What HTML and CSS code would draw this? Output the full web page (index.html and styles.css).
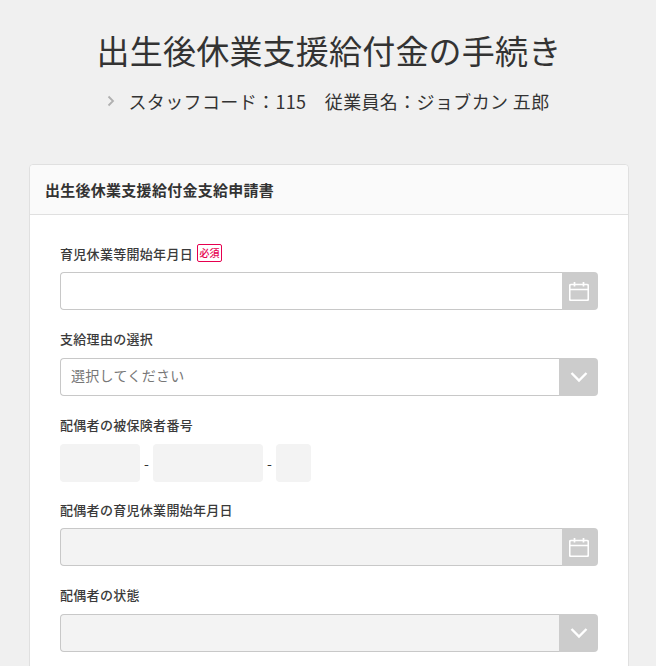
FILE: index.html
```html
<!DOCTYPE html>
<html lang="ja">
<head>
<meta charset="utf-8">
<title>出生後休業支援給付金の手続き</title>
<link rel="stylesheet" href="styles.css">
</head>
<body>
<header class="page-head">
  <h1 class="title">出生後休業支援給付金の手続き</h1>
  <p class="staff">
    <svg class="staff-chevron" width="8" height="12" viewBox="0 0 8 12"><path d="M1.500 1.500 6 6l-4.500 4.500" fill="none" stroke="#b0b0b0" stroke-width="1.800"/></svg>
    <span>スタッフコード：115　従業員名：ジョブカン 五郎</span>
  </p>
</header>
<main class="card">
  <h2 class="card-head">出生後休業支援給付金支給申請書</h2>
  <form class="card-body">
    <div class="field field-low">
      <div class="label">育児休業等開始年月日<span class="req">必須</span></div>
      <div class="control">
        <div class="input"></div>
        <div class="addon addon-date">
          <svg class="ico-date" width="20" height="20" viewBox="0 0 20 20"><path d="M2 3.500h16a1.300 1.300 0 0 1 1.300 1.300V18a1.300 1.300 0 0 1-1.300 1.300H2A1.300 1.300 0 0 1 .7 18V4.800A1.300 1.300 0 0 1 2 3.500ZM.7 8.500h18.600M5.500 1v4.500M14.500 1v4.500" fill="none" stroke="#fff" stroke-width="1.700"/></svg>
        </div>
      </div>
    </div>
    <div class="field">
      <div class="label">支給理由の選択</div>
      <div class="control">
        <div class="input placeholder">選択してください</div>
        <div class="addon addon-select">
          <svg width="18" height="12" viewBox="0 0 18 12"><path d="M1.500 2 9 9.500 16.500 2" fill="none" stroke="#fff" stroke-width="2.400"/></svg>
        </div>
      </div>
    </div>
    <div class="field field-split">
      <div class="label">配偶者の被保険者番号</div>
      <div class="split">
        <div class="seg seg-a"></div><span class="dash">-</span>
        <div class="seg seg-b"></div><span class="dash">-</span>
        <div class="seg seg-c"></div>
      </div>
    </div>
    <div class="field field-low">
      <div class="label">配偶者の育児休業開始年月日</div>
      <div class="control">
        <div class="input disabled"></div>
        <div class="addon addon-date">
          <svg class="ico-date" width="20" height="20" viewBox="0 0 20 20"><path d="M2 3.500h16a1.300 1.300 0 0 1 1.300 1.300V18a1.300 1.300 0 0 1-1.300 1.300H2A1.300 1.300 0 0 1 .7 18V4.800A1.300 1.300 0 0 1 2 3.500ZM.7 8.500h18.600M5.500 1v4.500M14.500 1v4.500" fill="none" stroke="#fff" stroke-width="1.700"/></svg>
        </div>
      </div>
    </div>
    <div class="field">
      <div class="label">配偶者の状態</div>
      <div class="control">
        <div class="input disabled"></div>
        <div class="addon addon-select">
          <svg width="18" height="12" viewBox="0 0 18 12"><path d="M1.500 2 9 9.500 16.500 2" fill="none" stroke="#fff" stroke-width="2.400"/></svg>
        </div>
      </div>
    </div>
  </form>
</main>
</body>
</html>
```
FILE: styles.css
```css
* { box-sizing: border-box; }
html, body { margin: 0; height: 666px; overflow: hidden; }
body {
  background: #f0f0f0;
  color: #333;
  font-family: "Noto Sans CJK JP", "Noto Sans", sans-serif;
}
.page-head { padding-top: 26px; text-align: center; }
.title {
  margin: 0;
  padding-left: 2px;
  font-size: 33px;
  letter-spacing: 0.2px;
  line-height: 48px;
  font-weight: 400;
}
.staff {
  margin: 12px 0 0;
  display: flex;
  justify-content: center;
  align-items: center;
  gap: 14px;
  font-size: 18px;
  letter-spacing: 0.36px;
  line-height: 30px;
}
.card {
  margin: 48px 27px 0 29px;
  background: #fff;
  border: 1px solid #e0e0e0;
  border-radius: 4px;
  height: 700px;
}
.card-head {
  margin: 0;
  height: 50px;
  padding-left: 15px;
  background: #fafafa;
  border-bottom: 1px solid #e0e0e0;
  border-radius: 4px 4px 0 0;
  font-size: 15px;
  letter-spacing: 0.27px;
  font-weight: 700;
  line-height: 50px;
}
.card-body { padding: 28px 30px 0; display: flex; flex-direction: column; gap: 18px; }
.label {
  display: flex;
  align-items: center;
  height: 20px;
  margin-bottom: 10px;
  font-size: 13px;
  font-weight: 500;
  letter-spacing: 0.3px;
  color: #3a3a3a;
}
.field-low .label { margin-bottom: 9px; }
.req {
  margin-left: 4px;
  padding: 0 1.500px;
  height: 18px;
  line-height: 16px;
  border: 1px solid #e6004f;
  border-radius: 2px;
  color: #e6004f;
  font-size: 10px;
  letter-spacing: 0;
  background: #fff;
}
.control { display: flex; height: 38px; }
.input {
  flex: 1;
  border: 1px solid #c8c8c8;
  border-right: 0;
  border-radius: 4px 0 0 4px;
  background: #fff;
  padding-left: 10px;
  font-size: 14px;
  line-height: 33px;
}
.placeholder { color: #777; letter-spacing: 0.3px; }
.disabled { background: #f3f3f3; }
.addon {
  display: flex;
  align-items: center;
  justify-content: center;
  background: #ccc;
  border-radius: 0 4px 4px 0;
}
.addon-date { width: 36px; }
.addon-select { width: 39px; }
.ico-date { margin-right: 2px; margin-bottom: 1px; }
.field-split { margin-bottom: -1px; }
.split { display: flex; align-items: center; height: 38px; }
.seg { height: 38px; background: #f3f3f3; border-radius: 4px; }
.seg-a { width: 80px; }
.seg-b { width: 110px; }
.seg-c { width: 35px; }
.dash { width: 13px; text-align: center; font-size: 14px; }
```
